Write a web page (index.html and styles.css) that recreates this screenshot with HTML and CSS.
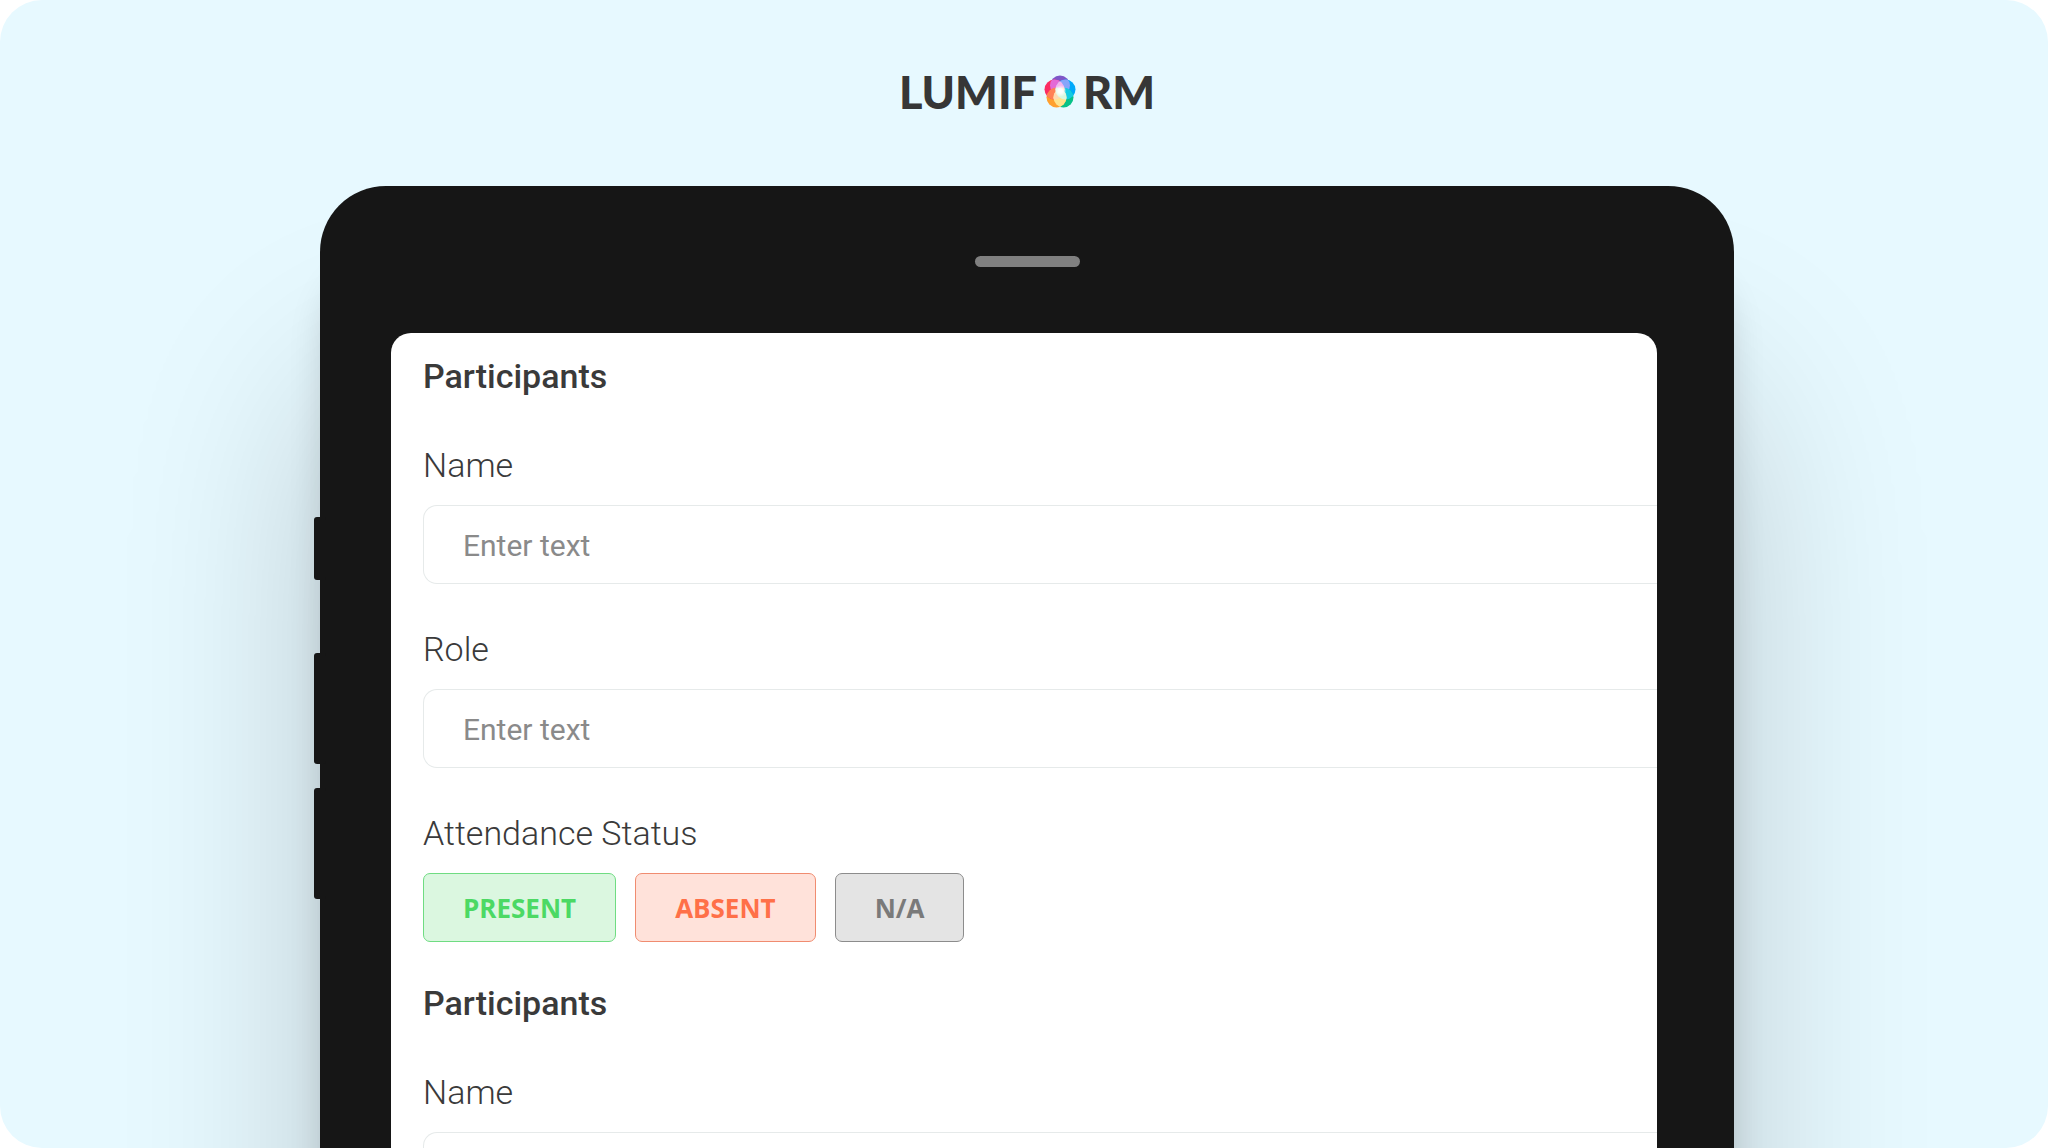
FILE: index.html
```html
<!DOCTYPE html>
<html lang="en">
<head>
    <meta charset="UTF-8">
    <meta name="viewport" content="width=device-width, initial-scale=1.0">
    <title>Lumiform</title>
    <link rel="stylesheet" href="styles.css">
</head>
<body>
    <div class="stage">
        <header class="logo">
            <span>LUMIF</span>
            <svg class="logo-mark" viewBox="0 0 32 34" aria-hidden="true">
                <defs>
                    <clipPath id="top"><circle cx="16" cy="10.5" r="10"/></clipPath>
                    <clipPath id="right"><circle cx="21.5" cy="14.5" r="10"/></clipPath>
                    <clipPath id="green"><circle cx="19.5" cy="22.5" r="10"/></clipPath>
                    <clipPath id="left"><circle cx="10.5" cy="14.5" r="10"/></clipPath>
                    <radialGradient id="glow">
                        <stop offset="0" stop-color="#fff"/>
                        <stop offset="0.4" stop-color="#fff" stop-opacity="0.85"/>
                        <stop offset="1" stop-color="#fff" stop-opacity="0"/>
                    </radialGradient>
                </defs>
                <circle cx="16" cy="10.5" r="10" fill="#7e57c8"/>
                <circle cx="21.5" cy="14.5" r="10" fill="#00a9fb"/>
                <circle cx="19.5" cy="22.5" r="10" fill="#06c287"/>
                <circle cx="12.5" cy="22.5" r="10" fill="#ffa02e"/>
                <circle cx="10.5" cy="14.5" r="10" fill="#fb2c62"/>
                <!-- overlaps between neighbouring petals -->
                <circle cx="10.5" cy="14.5" r="10" fill="#e469d6" clip-path="url(#top)"/>
                <circle cx="21.5" cy="14.5" r="10" fill="#86a5fa" clip-path="url(#top)"/>
                <circle cx="21.5" cy="14.5" r="10" fill="#13cbe2" clip-path="url(#green)"/>
                <circle cx="12.5" cy="22.5" r="10" fill="#ff8055" clip-path="url(#left)"/>
                <circle cx="12.5" cy="22.5" r="10" fill="#ffe48d" clip-path="url(#green)"/>
                <g clip-path="url(#left)">
                    <circle cx="21.5" cy="14.5" r="10" fill="#f3b4ee"/>
                    <circle cx="19.5" cy="22.5" r="10" fill="#ffd9b0"/>
                </g>
                <g clip-path="url(#right)">
                    <circle cx="12.5" cy="22.5" r="10" fill="#d8f8e0"/>
                </g>
                <circle cx="16.5" cy="16" r="6" fill="url(#glow)"/>
            </svg>
            <span>RM</span>
        </header>

        <div class="tablet">
            <div class="side-buttons">
                <i class="mute"></i>
                <i></i>
                <i></i>
            </div>
            <div class="speaker"></div>

            <form class="screen">
                <section>
                    <h2>Participants</h2>
                    <div class="field">
                        <label for="name-1">Name</label>
                        <input type="text" id="name-1" placeholder="Enter text">
                    </div>
                    <div class="field">
                        <label for="role-1">Role</label>
                        <input type="text" id="role-1" placeholder="Enter text">
                    </div>
                    <div class="field" role="group" aria-labelledby="status-1">
                        <span class="label" id="status-1">Attendance Status</span>
                        <div class="choices">
                            <button type="button" class="present">PRESENT</button>
                            <button type="button" class="absent">ABSENT</button>
                            <button type="button" class="na">N/A</button>
                        </div>
                    </div>
                </section>
                <section>
                    <h2>Participants</h2>
                    <div class="field">
                        <label for="name-2">Name</label>
                        <input type="text" id="name-2" placeholder="Enter text">
                    </div>
                </section>
            </form>
        </div>
    </div>
</body>
</html>
```
FILE: styles.css
```css
* {
    box-sizing: border-box;
}

body {
    margin: 0;
    background-color: #fff;
    color: #3a3a3a;
    font-family: Roboto, sans-serif;
}

.stage {
    height: 100vh;
    padding: 64px 314px 0 320px;
    border-radius: 42px;
    background-color: #e7f9ff;
    overflow: hidden;
}

/* Logo */
.logo {
    display: flex;
    justify-content: center;
    align-items: center;
    gap: 7px;
    height: 56px;
    margin-bottom: 66px;
    color: #363636;
    font-family: Lato, sans-serif;
    font-size: 45px;
    font-weight: 900;
}

.logo-mark {
    width: 32px;
    height: 34px;
}

/* Tablet */
.tablet {
    position: relative;
    padding-top: 70px;
    border-radius: 66px 66px 0 0;
    background-color: #161616;
    box-shadow: 0 80px 40px -10px rgba(0, 0, 0, 0.2), 0 200px 200px rgba(0, 0, 0, 0.2);
}

.side-buttons {
    position: absolute;
    top: 331px;
    left: -6px;
    display: flex;
    flex-direction: column;
    gap: 24px;
}

.side-buttons i {
    width: 12px;
    height: 111px;
    border-radius: 3px;
    background-color: #161616;
}

.side-buttons .mute {
    height: 63px;
    margin-bottom: 49px;
}

.speaker {
    width: 105px;
    height: 11px;
    margin: 0 auto 66px;
    border-radius: 6px;
    background-color: #808080;
}

/* Form */
.screen {
    margin: 0 77px 0 71px;
    padding: 23px 0 40px 32px;
    border-radius: 20px 20px 0 0;
    background-color: #fff;
    overflow: hidden;
}

section {
    margin-bottom: 41px;
}

h2 {
    margin: 0 0 49px;
    font-size: 34px;
    font-weight: 500;
    line-height: 40px;
}

.field {
    display: flex;
    flex-direction: column;
    gap: 20px;
    margin-bottom: 45px;
}

.field:last-child {
    margin-bottom: 0;
}

label,
.label {
    font-size: 34px;
    font-weight: 300;
    line-height: 40px;
}

input {
    width: 100%;
    height: 79px;
    padding: 2px 39px 0;
    border: 1px solid #e6eaea;
    border-right: 0;
    border-radius: 14px 0 0 14px;
    background-color: #fff;
    color: #3a3a3a;
    font-family: inherit;
    font-size: 30px;
    font-weight: 400;
}

input::placeholder {
    color: #8a8a8a;
}

.choices {
    display: flex;
    gap: 19px;
}

.choices button {
    height: 69px;
    padding: 0 39px;
    border: 1px solid;
    border-radius: 7px;
    font-family: "Open Sans", sans-serif;
    font-size: 26px;
    font-weight: 700;
    cursor: pointer;
}

.choices .present {
    border-color: #6fdc82;
    background-color: #dbf7e0;
    color: #4cd964;
}

.choices .absent {
    border-color: #f08c70;
    background-color: #ffe2da;
    color: #ff7048;
}

.choices .na {
    border-color: #8c8c8c;
    background-color: #e4e4e4;
    color: #7a7a7a;
}
```
